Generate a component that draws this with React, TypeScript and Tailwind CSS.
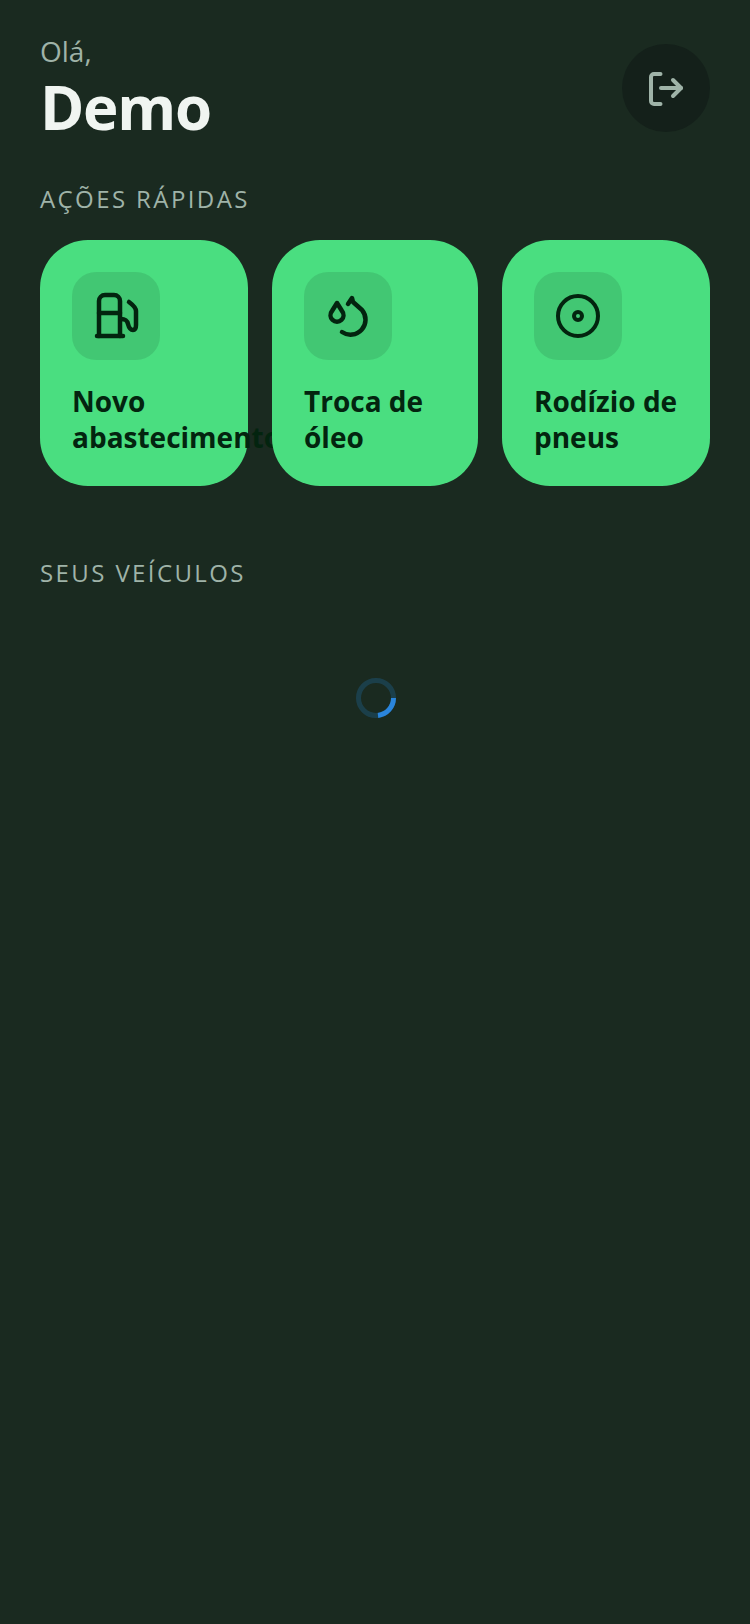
const FONT = "font-['Open_Sans','Noto_Sans',sans-serif]"

function FuelIcon() {
  return (
    <svg width="48" height="48" viewBox="0 0 48 48" fill="none" stroke="#03240f" strokeWidth="4.5" strokeLinecap="round" strokeLinejoin="round">
      <path d="M7 44V9a6 6 0 0 1 6-6h9a6 6 0 0 1 6 6v35" />
      <path d="M5 44h26" />
      <path d="M7 21h21" />
      <path d="M29 27c4 0 6 1 7 5 1 4 3 6 5 6s3-2 3-5V19c0-3-3-6-7-9" />
    </svg>
  )
}

function DropsIcon() {
  return (
    <svg width="48" height="48" viewBox="0 0 48 48" fill="none" stroke="#03240f" strokeWidth="4.5" strokeLinecap="round" strokeLinejoin="round">
      <path d="M13 11l5 8a6.5 6.5 0 1 1-10 0z" />
      <path d="M24 12l4-6 1 4 9 8A15 15 0 0 1 18 40" />
    </svg>
  )
}

function WheelIcon() {
  return (
    <svg width="48" height="48" viewBox="0 0 48 48" fill="none" stroke="#03240f" strokeWidth="4">
      <circle cx="24" cy="24" r="20" />
      <circle cx="24" cy="24" r="4" />
    </svg>
  )
}

function LogoutIcon() {
  return (
    <svg width="48" height="48" viewBox="0 0 48 48" fill="none" stroke="#9fb3a8" strokeWidth="4" strokeLinecap="round" strokeLinejoin="round">
      <path d="M18.5 10H12a3 3 0 0 0-3 3v24a3 3 0 0 0 3 3h6.5" />
      <path d="M19 24h20" />
      <path d="M31 16l8 8-8 8" />
    </svg>
  )
}

function Spinner() {
  return (
    <svg width="40" height="40" viewBox="0 0 40 40" fill="none" strokeWidth="5">
      <circle cx="20" cy="20" r="17.5" stroke="#2196f3" strokeOpacity="0.2" />
      <path d="M37.5 20A17.5 17.5 0 0 1 22 37.4" stroke="#2a85dc" />
    </svg>
  )
}

const actions = [
  { id: 'fuel', label: 'Novo abastecimento', icon: <FuelIcon />, width: 'w-[208px]' },
  { id: 'oil', label: 'Troca de óleo', icon: <DropsIcon />, width: 'w-[206px]' },
  { id: 'tires', label: 'Rodízio de pneus', icon: <WheelIcon />, width: 'w-[208px]' },
]

export default function App() {
  return (
    <div className={`${FONT} min-h-[1624px] bg-[#1a2a20] px-10 pt-8`}>
      <div className="flex items-start justify-between">
        <div>
          <p className="text-[28px] leading-[38px] text-[#9fb3a8]">Olá,</p>
          <h1 className="mt-[2px] text-[60px] leading-[70px] font-bold tracking-[-1.3px] text-[#f0f5f1]">Demo</h1>
        </div>
        <button className="mt-3 flex h-[88px] w-[88px] items-center justify-center rounded-full bg-[#14201a]">
          <LogoutIcon />
        </button>
      </div>

      <h2 className="mt-[41px] text-[24px] leading-[32px] tracking-[2.4px] text-[#9fb3a8]">AÇÕES RÁPIDAS</h2>

      <div className="mt-[25px] flex gap-6">
        {actions.map(a => (
          <div key={a.id} className={`${a.width} h-[246px] rounded-[48px] bg-[#4ade80] p-8`}>
            <div className="flex h-[88px] w-[88px] items-center justify-center rounded-3xl bg-black/10">
              {a.icon}
            </div>
            <p className="mt-[23px] text-[28px] leading-9 font-bold text-[#03240f]">{a.label}</p>
          </div>
        ))}
      </div>

      <h2 className="mt-[71px] text-[24px] leading-[32px] tracking-[2.4px] text-[#9fb3a8]">SEUS VEÍCULOS</h2>

      <div className="mt-[89px] flex justify-center pl-[2px]">
        <Spinner />
      </div>
    </div>
  )
}
